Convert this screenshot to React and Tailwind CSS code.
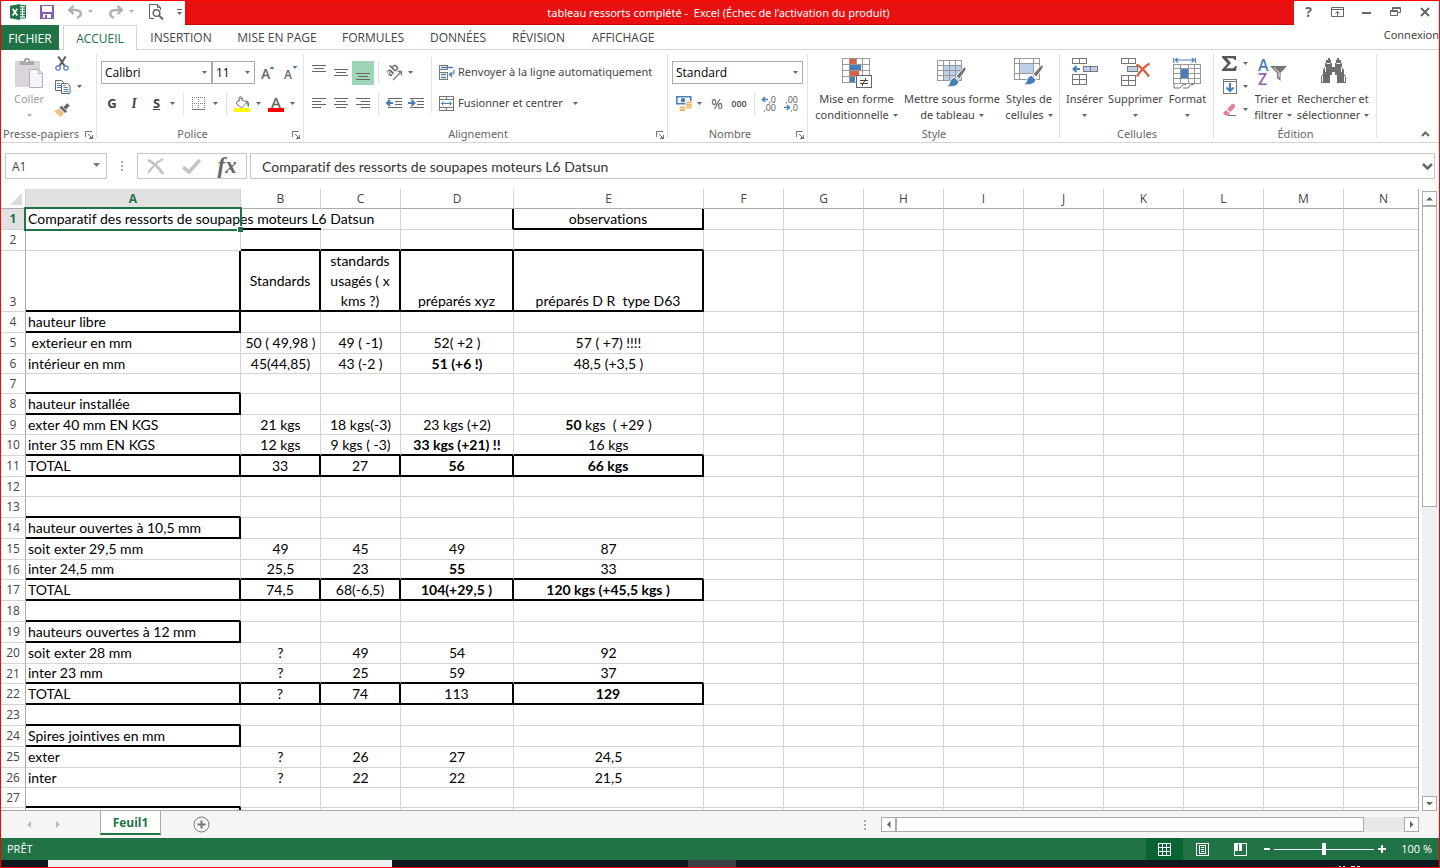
import React from "react";

/* ---------- small shared pieces ---------- */

function Caret({ className = "" }) {
  return (
    <svg width="5" height="3" viewBox="0 0 5 3" className={"shrink-0 " + className} fill="#666" aria-hidden="true">
      <path d="M0 0h5L2.5 3z" />
    </svg>
  );
}

function Tool({ label, w, h = "h-[24px]", children, className = "" }) {
  return (
    <button type="button" aria-label={label} className={"flex shrink-0 items-center justify-center " + h + " " + w + " " + className}>
      {children}
    </button>
  );
}

function Rule() {
  return <span className="h-[22px] w-px shrink-0 bg-[#e1e1e1]" />;
}

function Launcher({ label }) {
  return (
    <button type="button" aria-label={label} className="absolute right-[4px] bottom-[3px]">
      <svg width="8" height="8" viewBox="0 0 8 8" fill="none" stroke="#777" shapeRendering="crispEdges">
        <path d="M.5 6V.5H7M3 3l4 4M7.5 3.5v4h-4" />
        <path d="M5 6h2v2H5z" fill="#777" stroke="none" />
      </svg>
    </button>
  );
}

function Group({ title, w, launcher, children }) {
  return (
    <section aria-label={title} className={"relative flex h-[92px] shrink-0 flex-col " + w}>
      <div className="flex h-[76px] items-start">{children}</div>
      <h2 className={"h-[16px] text-center leading-4 text-[#666] " + (launcher ? "pr-[16px]" : "")}>{title}</h2>
      {launcher && <Launcher label={"Options " + title} />}
      <span className="absolute top-[4px] right-0 h-[84px] w-px bg-[#e1e1e1]" />
    </section>
  );
}

function Big({ icon, lines, w, arrowBelow, muted }) {
  return (
    <button type="button" className={"flex shrink-0 flex-col items-center pt-[8px] leading-4 whitespace-nowrap " + w + (muted ? " text-[#a0a0a0]" : " text-[#444]")}>
      <span className="flex h-[33px] items-start justify-center">{icon}</span>
      <span>{lines[0]}</span>
      {arrowBelow ? (
        <span className="flex h-4 items-center"><Caret className={muted ? "opacity-50" : ""} /></span>
      ) : (
        <span className="flex items-center gap-1">{lines[1]}<Caret /></span>
      )}
    </button>
  );
}

function Combo({ label, value, w }) {
  return (
    <span className={"relative h-[23px] shrink-0 text-xs " + w}>
      <select aria-label={label} defaultValue={value} className="h-full w-full appearance-none border border-[#ababab] bg-white pl-[3px] font-['Open_Sans',sans-serif] text-black outline-none">
        <option>{value}</option>
      </select>
      <Caret className="pointer-events-none absolute top-[10px] right-[5px]" />
    </span>
  );
}

/* ---------- icons ---------- */

const G = "#777";
const B = "#4a7ebb";

function ExcelLogo() {
  return (
    <svg width="16" height="16" viewBox="0 0 16 16" aria-hidden="true">
      <path d="M9 1.500h6.500v12.500H9z" fill="#fff" stroke="#217346" />
      <path d="M10 4h2M13 4h2M10 6.500h2M13 6.500h2M10 9h2M13 9h2M10 11.500h2M13 11.500h2" stroke="#217346" strokeWidth="1.500" />
      <path d="M0 1.800L10 0v16L0 14.200z" fill="#217346" />
      <path d="M2.600 4.800l4.600 6.600M7.200 4.800l-4.600 6.600" stroke="#fff" strokeWidth="1.700" />
    </svg>
  );
}

function Save() {
  return (
    <svg width="14" height="14" viewBox="0 0 14 14" aria-hidden="true" shapeRendering="crispEdges">
      <path d="M0 0h14v14H0z" fill="#8a5bb0" />
      <path d="M2 1h10v6H2zM3 9h8v4H3z" fill="#fff" />
      <path d="M5 10h2v3H5z" fill="#8a5bb0" />
    </svg>
  );
}

function Undo({ flip }) {
  return (
    <svg width="16" height="14" viewBox="0 0 16 14" fill="none" stroke="#b0b0b0" strokeWidth="2.400" className={flip ? "-scale-x-100" : ""} aria-hidden="true">
      <path d="M6.500.8L2.200 5l4.300 4.200M2.500 5H8c7 0 7.500 5.500 2 8" />
    </svg>
  );
}

function Preview() {
  return (
    <svg width="15" height="16" viewBox="0 0 15 16" fill="none" stroke="#666" aria-hidden="true">
      <path d="M5 14.500H.5V.5h8l3 3V6M8.500.5v3h3" />
      <circle cx="7.500" cy="9" r="3.300" fill="#fff" strokeWidth="1.500" />
      <path d="M10 11.500l4 4" strokeWidth="2" />
    </svg>
  );
}

function Paste() {
  return (
    <svg width="30" height="31" viewBox="0 0 30 31" aria-hidden="true">
      <path d="M1 3h25v26H1z" fill="#d9d5da" />
      <path d="M6 3h4V1.500C10 .5 11 0 13 0s3 .5 3 1.500V3h4v4H6z" fill="#a9a9a9" />
      <path d="M12 2h2v2h-2z" fill="#fff" />
      <path d="M15.500 11.500h9l4 4v14h-13z" fill="#f7f3fa" stroke="#b5b0b8" />
      <path d="M24.500 11.500v4h4" fill="none" stroke="#b5b0b8" />
    </svg>
  );
}

function Cut() {
  return (
    <svg width="14" height="15" viewBox="0 0 14 15" fill="none" aria-hidden="true">
      <path d="M3.300.5L9.500 9.800M10.700.5L4.500 9.800" stroke="#5c5c5c" strokeWidth="2" />
      <circle cx="3" cy="12" r="2.200" stroke={B} strokeWidth="1.200" />
      <circle cx="11" cy="12" r="2.200" stroke={B} strokeWidth="1.200" />
    </svg>
  );
}

function Copy() {
  return (
    <svg width="16" height="14" viewBox="0 0 16 14" aria-hidden="true">
      <path d="M.5.5h6l2 2v8h-8z" fill="#fff" stroke="#666" />
      <path d="M2 3.500h3M2 5.500h4M2 7.500h4" stroke={B} />
      <path d="M6.500 3.500h6l2.500 2.500v7.500H6.500z" fill="#fff" stroke="#666" />
      <path d="M8.500 7.500h4M8.500 9.500h5M8.500 11.500h5M8.500 5.500h2" stroke={B} />
    </svg>
  );
}

function Brush() {
  return (
    <svg width="16" height="14" viewBox="0 0 16 14" aria-hidden="true">
      <path d="M5 5.500l5 5-3.500 3.500L0 8z" fill="#ecc27e" />
      <path d="M5.500 4.500l5.500 5.500 2.500-2L8 2.500z" fill="#666" />
      <path d="M10.500 5.500l4-4" stroke="#666" strokeWidth="3.500" />
      <path d="M7.500 2.500l6 6" stroke="#fff" strokeWidth=".6" />
    </svg>
  );
}

function SizeA({ up }) {
  return (
    <svg width="15" height="16" viewBox="0 0 15 16" className="overflow-visible" aria-hidden="true">
      <text x="0" y="14" fontFamily="Open Sans, sans-serif" fontWeight="600" fontSize={up ? 14 : 12} fill="#666">A</text>
      <path d={up ? "M8.500 4l2.500-3 2.500 3z" : "M8.500 1h5L11 4z"} fill={B} />
    </svg>
  );
}

function Borders() {
  return (
    <svg width="13" height="13" viewBox="0 0 13 13" fill="none" stroke="#777" shapeRendering="crispEdges" aria-hidden="true">
      <path strokeDasharray="1 1" d="M0 .5h13M0 6.500h13M.5 0v12M6.500 0v12M12.500 0v12" />
      <path d="M0 12.500h13" />
    </svg>
  );
}

function Fill() {
  return (
    <svg width="16" height="16" viewBox="0 0 16 16" aria-hidden="true">
      <path d="M2 7l5-5 5.500 5-5 5z" fill="#fff" stroke="#777" />
      <path d="M5 6V2c0-2 3-2 3 0v3" fill="none" stroke="#777" />
      <path d="M11 4c4 1 5 4 3.500 7-1 0-1.500-2-1-3z" fill={B} />
      <path d="M0 12h16v4H0z" fill="#ff0" />
    </svg>
  );
}

function FontColor() {
  return (
    <svg width="16" height="16" viewBox="0 0 16 16" className="overflow-visible" aria-hidden="true">
      <text x="8" y="12" textAnchor="middle" fontFamily="Open Sans, sans-serif" fontWeight="600" fontSize="15" fill="#666">A</text>
      <path d="M0 12h16v4H0z" fill="red" />
    </svg>
  );
}

function Lines({ d, w = 14, h = 11 }) {
  return (
    <svg width={w} height={h} viewBox={"0 0 " + w + " " + h} stroke="#666" fill="none" shapeRendering="crispEdges" aria-hidden="true">
      <path d={d} />
    </svg>
  );
}

function Orientation() {
  return (
    <svg width="17" height="16" viewBox="0 0 17 16" className="overflow-visible" aria-hidden="true">
      <text transform="translate(4 12) rotate(-45)" fontFamily="Open Sans, sans-serif" fontWeight="600" fontSize="11" fill="#555">ab</text>
      <path d="M7 15l8-8M11.500 6.500H15.500V10.500" stroke="#777" strokeWidth="1.300" fill="none" />
    </svg>
  );
}

function Indent({ right }) {
  return (
    <svg width="17" height="11" viewBox="0 0 17 11" fill="none" aria-hidden="true">
      <path d="M2 .5h14M9 3.500h7M9 6.500h7M2 9.500h14" stroke="#666" shapeRendering="crispEdges" />
      <path d={right ? "M0 5h6M3.500 2l3 3-3 3" : "M7 5H1M4 2L1 5l3 3"} stroke={B} strokeWidth="2" />
    </svg>
  );
}

function Wrap() {
  return (
    <svg width="16" height="15" viewBox="0 0 16 15" fill="none" aria-hidden="true">
      <path d="M.5 0v15M.5 .5h8M.5 4.500h8v-4M.5 7.500h8v7h-8" stroke="#777" shapeRendering="crispEdges" />
      <path d="M2 2.500h12M2 9.500h5M2 12.500h5M15 5v2c0 2-1 2.500-4.500 2.500M13 7l-2.500 2.500L13 12" stroke={B} strokeWidth="1.300" />
    </svg>
  );
}

function Merge() {
  return (
    <svg width="15" height="15" viewBox="0 0 15 15" fill="none" aria-hidden="true">
      <path d="M.5.5h14v14H.5zM0 3.500h15M0 11.500h15M7.500 0v3M7.500 12v3" stroke="#777" shapeRendering="crispEdges" />
      <path d="M2.500 7.500h10M4.500 5.500l-2 2 2 2M10.500 5.500l2 2-2 2" stroke={B} />
    </svg>
  );
}

function Money() {
  return (
    <svg width="16" height="16" viewBox="0 0 16 16" aria-hidden="true">
      <path d="M.8.800h14v7H.800z" fill="#fff" stroke={B} strokeWidth="1.600" />
      <circle cx="7" cy="4.300" r="2.200" fill={B} />
      <path d="M9.500 5h7v10h-7zM3 9h6.500v7H3z" fill="#fff" />
      <path d="M11 6.500h4M11 9h4M11 11.500h4M4.500 11.500h4M4.500 14h4" stroke="#ecb765" strokeWidth="1.800" strokeLinecap="round" />
    </svg>
  );
}

function Decimals({ more }) {
  return (
    <svg width="16" height="16" viewBox="0 0 16 16" className="overflow-visible" fontFamily="Open Sans, sans-serif" fontSize="9" fill="#555" aria-hidden="true">
      <text x="15" y="7" textAnchor="end">{more ? ",0" : ",00"}</text>
      <text x="15" y="15" textAnchor="end">{more ? ",00" : ",0"}</text>
      <path d={more ? "M7 3.500H1.500M4 1L1.500 3.500 4 6" : "M1 11.500h5.500M4 9l2.500 2.500L4 14"} stroke={B} strokeWidth="1.500" fill="none" />
    </svg>
  );
}

function CondFormat() {
  return (
    <svg width="30" height="31" viewBox="0 0 30 31" shapeRendering="crispEdges" aria-hidden="true">
      <path d="M.5.5h27v24H.5z" fill="#fff" />
      <path d="M8 1h6v5H8zM8 13h9v5H8z" fill="#d9613f" />
      <path d="M8 7h11v5H8zM8 19h5v5H8z" fill={B} />
      <path d="M.5.5h27v24H.5zM0 6.500h28M0 12.500h28M0 18.500h28M7.500 0v25M14.500 0v7M20.500 0v25" fill="none" stroke="#999" />
      <path d="M14.500 17.500h15v12h-15z" fill="#fff" stroke="#666" />
      <path d="M18 22.500h8M18 25.500h8M24 20l-4 8" stroke="#444" />
    </svg>
  );
}

function BrushOver() {
  return (
    <>
      <path d="M28.500 7c1.500 1 .5 3-1 5l-5 7-3.500-3 6-6.500c1.500-1.500 2.500-3 3.500-2.500z" fill="#777" stroke="#fff" />
      <path d="M17.500 17.500l4.500 4c-1 5-7 6-13 5 3-1 3-2 4-5 .8-2 2.500-4 4.500-4z" fill={B} stroke="#fff" />
    </>
  );
}

function TableFormat() {
  return (
    <svg width="30" height="31" viewBox="0 -2 30 31" aria-hidden="true">
      <g shapeRendering="crispEdges">
        <path d="M.5.5h24v20H.5z" fill="#fff" />
        <path d="M7 6h18v15H7z" fill="#bdd0e9" />
        <path d="M.5.5h24v20H.5zM0 5.500h25M0 10.500h25M0 15.500h25M6.500 0v21M12.500 0v21M18.500 0v21" fill="none" stroke="#999" />
      </g>
      <BrushOver />
    </svg>
  );
}

function CellStyles() {
  return (
    <svg width="30" height="30" viewBox="0 0 30 30" aria-hidden="true">
      <g shapeRendering="crispEdges">
        <path d="M.5.5h25v21H.5z" fill="#fff" />
        <path d="M6 6h14v10H6z" fill="#bdd0e9" />
        <path d="M.5.5h25v21H.5zM0 5.500h26M0 15.500h26M5.500 0v22M19.500 0v22" fill="none" stroke="#999" />
      </g>
      <BrushOver />
    </svg>
  );
}

function InsertCells() {
  return (
    <svg width="26" height="28" viewBox="0 0 26 28" fill="none" aria-hidden="true">
      <g shapeRendering="crispEdges" stroke={G}>
        <path d="M.5.5h14v5H.5zM7.500 0v6M.5 16.500h14v10H.5zM0 21.500h15M7.500 16v11" />
        <path d="M11.500 8.500h14v5h-14zM18.500 8v6" fill="#bdd0e9" />
      </g>
      <path d="M8 11H2M4.500 8L1.500 11l3 3" stroke={B} strokeWidth="2" />
    </svg>
  );
}

function DeleteCells() {
  return (
    <svg width="30" height="28" viewBox="0 0 30 28" fill="none" aria-hidden="true">
      <g shapeRendering="crispEdges" stroke={G}>
        <path d="M.5.5h14v5H.5zM7.500 0v6M.5 17.500h14v10H.5zM0 22.500h15M7.500 17v11" />
        <path d="M6.500 8.500h10v5h-10z" fill="#bdd0e9" />
      </g>
      <path d="M15.500 6.500c5 3 9 7 12.500 12M28.500 5.500c-5 3-9 7-12.500 13" stroke="#d9613f" strokeWidth="2.400" />
    </svg>
  );
}

function FormatCells() {
  return (
    <svg width="29" height="32" viewBox="0 1 29 32" fill="none" aria-hidden="true">
      <path d="M.8 0v6M22.500 0v6M2 3h20M5 .5L2.500 3 5 5.500M18.500.5L21 3l-2.500 2.500" stroke={B} strokeWidth="1.200" />
      <path d="M.5 7.500h27v19H.5z" fill="#fff" />
      <path d="M8 12h7v9H8z" fill={B} />
      <path d="M.5 7.500h27v19H.5zM0 11.500h28M0 16.500h8M15 16.500h13M0 21.500h28M7.500 7v20M15.500 7v20M21.500 7v20" stroke="#999" shapeRendering="crispEdges" />
      <path d="M1 27v4h6l3-3.500h3M10 31h5l3-3.500h3" stroke={G} />
    </svg>
  );
}

function Sigma() {
  return (
    <svg width="15" height="15" viewBox="0 0 15 15" aria-hidden="true">
      <path d="M0 0h14v4h-1.500c-.3-1.200-1-1.800-2.500-1.800H4.800L9 7l-4.800 5.200H10.500c1.500 0 2.200-.8 2.800-2.200h1.500L14 15H0v-1.500L5.500 7.500 0 1.500z" fill="#555" />
    </svg>
  );
}

function FillDown() {
  return (
    <svg width="14" height="15" viewBox="0 0 14 15" fill="none" aria-hidden="true">
      <path d="M.5.5h13v14H.5zM0 2.500h14" stroke={G} shapeRendering="crispEdges" />
      <path d="M7 4v8M3.500 8.500L7 12l3.500-3.500" stroke={B} strokeWidth="2" />
    </svg>
  );
}

function Eraser() {
  return (
    <svg width="14" height="14" viewBox="0 0 14 14" aria-hidden="true">
      <path d="M4 6l5-5c1-1 4 1 3 3L7.500 9z" fill="#e58094" />
      <path d="M0 10l3-3 4 3.500L5 12.500H2z" fill="#e58094" />
      <path d="M5 12.500h8" stroke={G} />
    </svg>
  );
}

function SortFilter() {
  return (
    <svg width="30" height="30" viewBox="0 0 30 30" className="overflow-visible" fontFamily="Open Sans, sans-serif" fontWeight="600" aria-hidden="true">
      <text x="0" y="13" fontSize="16" fill={B}>A</text>
      <text x="0" y="27" fontSize="16" fill="#9a5fb5">Z</text>
      <path d="M12 8h17l-6.500 7v8L19 20v-5z" fill="#777" />
      <path d="M16 9.500l5 5v5" stroke="#fff" fill="none" />
    </svg>
  );
}

function Binoculars() {
  return (
    <svg width="27" height="26" viewBox="0 0 27 26" fill="#6e6e6e" aria-hidden="true">
      <path d="M6 2h2V0h2v2h1v3h1v4h3V5h1V2h1V0h2v2h2v3h1v4l2 3v4l2 3v6H17v-8h-2v-3h-3v3h-2v8H1v-6l2-3v-4l2-3V5h1z" />
      <path d="M6.500 5.500h4M16.500 5.500h4M5.500 9v5M21.500 9v5M2.500 18v6M24.500 18v6" stroke="#fff" />
    </svg>
  );
}

/* ---------- title bar and tabs ---------- */

function TitleBar() {
  return (
    <header className="flex h-[24px] shrink-0 bg-white">
      <div className="flex w-[184px] shrink-0 items-center pb-[3px] pl-[9px]">
        <span className="w-[28px]"><ExcelLogo /></span>
        <button type="button" aria-label="Enregistrer" className="w-[29px] pl-[2px]"><Save /></button>
        <button type="button" aria-label="Annuler" className="flex w-[41px] items-center gap-[5px]"><Undo /><Caret className="opacity-50" /></button>
        <button type="button" aria-label="Rétablir" className="flex w-[41px] items-center gap-[5px]"><Undo flip /><Caret className="opacity-50" /></button>
        <button type="button" aria-label="Aperçu avant impression" className="w-[28px]"><Preview /></button>
        <button type="button" aria-label="Personnaliser la barre d'outils" className="pt-[2px]">
          <svg width="5" height="7" viewBox="0 0 5 7" fill="#666"><path d="M0 0h5v1H0zM0 3h5L2.500 6z" /></svg>
        </button>
      </div>
      <h1 className="flex-1 truncate border-b border-[#c00] bg-[#e81010] pr-[42px] text-center leading-6 whitespace-pre text-white">{"tableau ressorts complété -  Excel (Échec de l’activation du produit)"}</h1>
      <div className="flex w-[145px] shrink-0 items-center pb-[3px] text-[#666]">
        <button type="button" aria-label="Aide" className="w-[29px] text-center text-sm leading-5 font-bold">?</button>
        <button type="button" aria-label="Options d'affichage du ruban" className="flex w-[29px] justify-center">
          <svg width="13" height="10" viewBox="0 0 13 10" fill="none" stroke="#666"><path d="M.5.5h12v9H.5zM0 2.500h13M6.500 9V4.500M4.500 6.500l2-2 2 2" /></svg>
        </button>
        <button type="button" aria-label="Réduire" className="flex w-[29px] justify-center pt-[3px]">
          <svg width="9" height="2"><path d="M0 0h9v2H0z" fill="#666" /></svg>
        </button>
        <button type="button" aria-label="Niveau inférieur" className="flex w-[29px] justify-center">
          <svg width="11" height="9" viewBox="0 0 11 9" fill="none" stroke="#666"><path d="M2.500 3V.5h8v5H8M3 1.500h7M.5 3.500h7v5h-7zM1 4.500h6" /></svg>
        </button>
        <button type="button" aria-label="Fermer" className="flex w-[29px] justify-center">
          <svg width="10" height="10" viewBox="0 0 10 10" stroke="#666" strokeWidth="2"><path d="M1 1l8 8M9 1L1 9" /></svg>
        </button>
      </div>
    </header>
  );
}

const tabs = [
  ["INSERTION", "w-[88px]"],
  ["MISE EN PAGE", "w-[104px]"],
  ["FORMULES", "w-[88px]"],
  ["DONNÉES", "w-[82px]"],
  ["RÉVISION", "w-[79px]"],
  ["AFFICHAGE", "w-[90px]"],
];

function Tabs() {
  return (
    <nav className="flex h-[25px] shrink-0 overflow-hidden font-['Open_Sans',sans-serif] text-xs leading-5 text-[#444]">
      <button type="button" className="w-[58px] shrink-0 bg-[#217346] pt-[2px] text-white">FICHIER</button>
      <span className="w-[4px] shrink-0 border-b border-[#d4d4d4]" />
      <button type="button" className="w-[74px] shrink-0 border border-b-0 border-[#d4d4d4] pt-[1px] text-[#217346]">ACCUEIL</button>
      <div className="flex min-w-0 flex-1 border-b border-[#d4d4d4]">
        {tabs.map(([name, w]) => (
          <button key={name} type="button" className={"shrink-0 pt-[2px] whitespace-nowrap " + w}>{name}</button>
        ))}
        <a href="#connexion" className="ml-auto shrink-0 font-['Noto_Sans',sans-serif] text-[11px] leading-5 whitespace-nowrap">Connexion</a>
      </div>
    </nav>
  );
}

/* ---------- ribbon ---------- */

function Ribbon() {
  return (
    <div className="flex h-[93px] shrink-0 border-b border-[#d4d4d4]">
      <Group title="Presse-papiers" w="w-[96px]" launcher>
        <span className="w-[3px]" />
        <Big icon={<Paste />} lines={["Coller"]} w="w-[50px]" arrowBelow muted />
        <div className="flex flex-col pt-[2px]">
          <Tool label="Couper" w="w-[16px]" h="h-[23px]"><Cut /></Tool>
          <Tool label="Copier" w="w-[28px]" h="h-[23px]" className="gap-[6px]"><Copy /><Caret /></Tool>
          <Tool label="Reproduire la mise en forme" w="w-[16px]" h="h-[23px]"><Brush /></Tool>
        </div>
      </Group>

      <Group title="Police" w="w-[207px]" launcher>
        <div className="flex flex-col pt-[7px] pl-[4px]">
          <div className="flex h-[31px] items-center">
            <Combo label="Police" value="Calibri" w="w-[111px]" />
            <Combo label="Taille de police" value="11" w="w-[43px]" />
            <Tool label="Augmenter la taille" w="w-[27px]"><SizeA up /></Tool>
            <Tool label="Réduire la taille" w="w-[19px]"><SizeA /></Tool>
          </div>
          <div className="flex h-[31px] items-center text-[13px] text-[#444]">
            <Tool label="Gras" w="w-[22px]"><b>G</b></Tool>
            <Tool label="Italique" w="w-[22px]"><i className="font-serif font-bold">I</i></Tool>
            <Tool label="Souligné" w="w-[38px]" className="gap-[10px]"><b className="underline">S</b><Caret /></Tool>
            <Rule />
            <Tool label="Bordures" w="w-[42px]" className="gap-[8px]"><Borders /><Caret /></Tool>
            <Rule />
            <Tool label="Couleur de remplissage" w="w-[40px]" className="gap-[6px]"><Fill /><Caret /></Tool>
            <Tool label="Couleur de police" w="w-[28px]" className="gap-[6px]"><FontColor /><Caret /></Tool>
          </div>
        </div>
      </Group>

      <Group title="Alignement" w="w-[364px]" launcher>
        <div className="flex pt-[7px] pl-[4px]">
          <div className="flex flex-col">
            <div className="flex h-[31px] items-center">
              <Tool label="Aligner en haut" w="w-[22px]" className="pb-[8px]"><Lines h={7} d="M0 .5h14M2 3.500h10M0 6.500h14" /></Tool>
              <Tool label="Aligner au centre" w="w-[22px]"><Lines h={7} d="M0 .5h14M2 3.500h10M0 6.500h14" /></Tool>
              <Tool label="Aligner en bas" w="w-[22px]" className="bg-[#9fd5b7] pt-[8px]"><Lines h={7} d="M0 .5h14M2 3.500h10M0 6.500h14" /></Tool>
              <span className="w-[4px]" /><Rule />
              <Tool label="Orientation" w="w-[40px]" className="gap-[5px]"><Orientation /><Caret /></Tool>
            </div>
            <div className="flex h-[31px] items-center">
              <Tool label="Aligner à gauche" w="w-[22px]"><Lines d="M0 .5h14M0 3.500h9M0 6.500h14M0 9.500h9" /></Tool>
              <Tool label="Centrer" w="w-[22px]"><Lines d="M0 .5h14M2 3.500h10M0 6.500h14M2 9.500h10" /></Tool>
              <Tool label="Aligner à droite" w="w-[22px]"><Lines d="M0 .5h14M5 3.500h9M0 6.500h14M5 9.500h9" /></Tool>
              <span className="w-[4px]" /><Rule />
              <span className="w-[4px]" />
              <Tool label="Diminuer le retrait" w="w-[22px]"><Indent /></Tool>
              <Tool label="Augmenter le retrait" w="w-[22px]"><Indent right /></Tool>
            </div>
          </div>
          <span className="ml-[4px] h-[56px] w-px bg-[#e1e1e1]" />
          <div className="flex flex-col pl-[7px] whitespace-nowrap text-[#444]">
            <button type="button" className="flex h-[31px] items-center gap-[3px]"><Wrap />Renvoyer à la ligne automatiquement</button>
            <button type="button" className="flex h-[31px] items-center gap-[4px]"><Merge />Fusionner et centrer<Caret className="ml-[6px]" /></button>
          </div>
        </div>
      </Group>

      <Group title="Nombre" w="w-[140px]" launcher>
        <div className="flex flex-col pt-[7px] pl-[4px]">
          <div className="flex h-[31px] items-center">
            <Combo label="Format de nombre" value="Standard" w="w-[131px]" />
          </div>
          <div className="flex h-[31px] items-center text-[#555]">
            <Tool label="Format comptable" w="w-[34px]" className="gap-[5px]"><Money /><Caret /></Tool>
            <Tool label="Pourcentage" w="w-[22px]" className="text-sm">%</Tool>
            <Tool label="Milliers" w="w-[22px]" className="text-[9px] font-semibold">000</Tool>
            <span className="w-[4px]" /><Rule />
            <span className="w-[3px]" />
            <Tool label="Ajouter une décimale" w="w-[22px]"><Decimals more /></Tool>
            <Tool label="Réduire les décimales" w="w-[22px]"><Decimals /></Tool>
          </div>
        </div>
      </Group>

      <Group title="Style" w="w-[252px]">
        <Big icon={<CondFormat />} lines={["Mise en forme", "conditionnelle"]} w="w-[97px]" />
        <Big icon={<TableFormat />} lines={["Mettre sous forme", "de tableau"]} w="w-[94px]" />
        <Big icon={<CellStyles />} lines={["Styles de", "cellules"]} w="w-[60px]" />
      </Group>

      <Group title="Cellules" w="w-[154px]">
        <Big icon={<InsertCells />} lines={["Insérer"]} w="w-[49px]" arrowBelow />
        <Big icon={<DeleteCells />} lines={["Supprimer"]} w="w-[53px]" arrowBelow />
        <Big icon={<FormatCells />} lines={["Format"]} w="w-[51px]" arrowBelow />
      </Group>

      <Group title="Édition" w="w-[163px]">
        <div className="flex flex-col pt-[2px] pl-[6px]">
          <Tool label="Somme automatique" w="w-[30px]" h="h-[23px]" className="gap-[6px]"><Sigma /><Caret /></Tool>
          <Tool label="Remplissage" w="w-[30px]" h="h-[23px]" className="gap-[6px]"><FillDown /><Caret /></Tool>
          <Tool label="Effacer" w="w-[30px]" h="h-[23px]" className="gap-[6px]"><Eraser /><Caret /></Tool>
        </div>
        <Big icon={<SortFilter />} lines={["Trier et", "filtrer"]} w="w-[46px]" />
        <Big icon={<Binoculars />} lines={["Rechercher et", "sélectionner"]} w="w-[74px]" />
      </Group>

      <button type="button" aria-label="Réduire le ruban" className="mt-auto mr-[9px] mb-[5px] ml-auto">
        <svg width="9" height="6" viewBox="0 0 9 6" fill="none" stroke="#666" strokeWidth="2"><path d="M1 5l3.500-3.500L8 5" /></svg>
      </button>
    </div>
  );
}

/* ---------- formula bar ---------- */

function FormulaBar() {
  return (
    <div className="flex h-[46px] shrink-0 items-start pt-[10px] pr-[4px] pl-[4px] text-[13px] text-[#444]">
      <div className="relative h-[26px] w-[102px] shrink-0">
        <input aria-label="Zone Nom" defaultValue="A1" className="h-full w-full border border-[#c6c6c6] pl-[6px] font-['Open_Sans',sans-serif] text-xs outline-none" />
        <svg width="7" height="4" className="absolute top-[10px] right-[7px]" fill="#777"><path d="M0 0h7L3.500 4z" /></svg>
      </div>
      <svg width="30" height="26" fill="#aaa" shapeRendering="crispEdges" aria-hidden="true"><path d="M14 8h2v2h-2zM14 12h2v2h-2zM14 16h2v2h-2z" /></svg>
      <div className="flex h-[26px] w-[110px] shrink-0 items-center justify-around border border-[#c6c6c6] px-[1px]">
        <button type="button" aria-label="Annuler la saisie">
          <svg width="18" height="17" viewBox="0 0 18 17" stroke="#c4c4c4" fill="none"><path d="M1 2c6 3 11 8 15 14" strokeWidth="3" /><path d="M16 1C10 4 5 9 1 15" strokeWidth="2" /></svg>
        </button>
        <button type="button" aria-label="Entrer">
          <svg width="19" height="16" viewBox="0 0 19 16" stroke="#c4c4c4" fill="none"><path d="M1 9l6 5L18 2" strokeWidth="3.500" /></svg>
        </button>
        <button type="button" aria-label="Insérer une fonction" className="font-['Liberation_Serif',serif] text-[23px] leading-5 font-bold text-[#666] italic">fx</button>
      </div>
      <div className="relative ml-[3px] h-[26px] min-w-0 flex-1">
        <input aria-label="Barre de formule" defaultValue="Comparatif des ressorts de soupapes moteurs L6 Datsun" className="h-full w-full border border-[#c6c6c6] pl-[11px] font-[Lato,sans-serif] text-sm text-[#333] outline-none [font-variant-ligatures:none]" />
        <svg width="11" height="8" viewBox="0 0 11 8" className="absolute top-[10px] right-[2px]" fill="none" stroke="#666" strokeWidth="2.500"><path d="M1 1l4.500 4.500L10 1" /></svg>
      </div>
    </div>
  );
}

/* ---------- worksheet ---------- */

const letters = ["A", "B", "C", "D", "E", "F", "G", "H", "I", "J", "K", "L", "M", "N"];
const colWidths = ["w-[215px]", "w-[80px]", "w-[80px]", "w-[113px]", "w-[190px]"];
const T = "h-[20px]";
const M = "h-[21px]";

/* h: height, v: values A–E, r / b: columns with a thick right / bottom edge, bold: bold columns */
const rows = [
  { h: M, v: ["", "", "", "", "observations"], r: "DE", b: "BE" },
  { h: M, v: [], b: "BCDE" },
  { h: "h-[61px]", v: ["", "Standards", "standards usagés ( x kms ?)", "préparés xyz", "préparés D R  type D63"], r: "ABCDE", b: "ABCDE" },
  { h: M, v: ["hauteur libre"], r: "A", b: "A" },
  { h: M, v: [" exterieur en mm", "50 ( 49,98 )", "49 ( -1)", "52( +2 )", "57 ( +7) !!!!"] },
  { h: T, v: ["intérieur en mm", "45(44,85)", "43 (-2 )", "51 (+6 !)", "48,5 (+3,5 )"], bold: "D" },
  { h: T, v: [], b: "A" },
  { h: M, v: ["hauteur installée"], r: "A", b: "A" },
  { h: T, v: ["exter 40 mm EN KGS", "21 kgs", "18 kgs(-3)", "23 kgs (+2)", <><b key="n">50</b>{" kgs  ( +29 )"}</>] },
  { h: M, v: ["inter 35 mm EN KGS", "12 kgs", "9 kgs ( -3)", "33 kgs (+21) !!", "16 kgs"], b: "ABCDE", bold: "D" },
  { h: M, v: ["TOTAL", "33", "27", "56", "66 kgs"], r: "ABCDE", b: "ABCDE", bold: "DE" },
  { h: T, v: [] },
  { h: M, v: [], b: "A" },
  { h: M, v: ["hauteur ouvertes à 10,5 mm"], r: "A", b: "A" },
  { h: M, v: ["soit exter 29,5 mm", "49", "45", "49", "87"] },
  { h: T, v: ["inter 24,5 mm", "25,5", "23", "55", "33"], b: "ABCDE", bold: "D" },
  { h: M, v: ["TOTAL", "74,5", "68(-6,5)", "104(+29,5 )", "120 kgs (+45,5 kgs )"], r: "ABCDE", b: "ABCDE", bold: "DE" },
  { h: M, v: [], b: "A" },
  { h: M, v: ["hauteurs ouvertes à 12 mm"], r: "A", b: "A" },
  { h: M, v: ["soit exter 28 mm", "?", "49", "54", "92"] },
  { h: T, v: ["inter 23 mm", "?", "25", "59", "37"], b: "ABCDE" },
  { h: M, v: ["TOTAL", "?", "74", "113", "129"], r: "ABCDE", b: "ABCDE", bold: "E" },
  { h: M, v: [], b: "A" },
  { h: M, v: ["Spires jointives en mm"], r: "A", b: "A" },
  { h: M, v: ["exter", "?", "26", "27", "24,5"] },
  { h: T, v: ["inter", "?", "22", "22", "21,5"] },
  { h: T, v: [], b: "A" },
];

function edges(row, col) {
  const right = (row.r || "").includes(col) ? "border-r-2 border-r-black" : "border-r border-r-[#d4d4d4]";
  const bottom = (row.b || "").includes(col) ? "border-b-2 border-b-black" : "border-b border-b-[#d4d4d4]";
  return right + " " + bottom;
}

function Cell({ row, index, col, i }) {
  if (index === 0 && i === 0) {
    return (
      <td className="relative border-r border-b border-[#d4d4d4] p-0 pl-[2px] whitespace-nowrap">
        <span>Comparatif des ressorts de soupapes moteurs L6 Datsun</span>
        <span className="absolute -top-[2px] -right-[2px] -bottom-[2px] -left-[2px] border-2 border-[#217346]">
          <span className="absolute -right-[3px] -bottom-[3px] h-[6px] w-[6px] border-t border-l border-white bg-[#217346]" />
        </span>
      </td>
    );
  }
  if (index === 0 && i === 1) {
    return <td className="border-b-2 border-b-black p-0" />;
  }
  const wrap = index === 2 && i === 2;
  const align = i === 0 ? "pl-[2px] text-left whitespace-pre" : wrap ? "text-center" : "text-center whitespace-pre";
  const valign = index === 2 && i !== 1 && !wrap ? "align-bottom" : "align-middle";
  const bold = (row.bold || "").includes(col) ? "font-bold" : "";
  return (
    <td className={"p-0 " + edges(row, col) + " " + align + " " + valign + " " + bold}>
      {wrap ? <div className="flex h-[58px] items-center justify-center px-[8px] leading-5">{row.v[i]}</div> : row.v[i]}
    </td>
  );
}

function Sheet() {
  return (
    <div className="min-w-0 flex-1 overflow-hidden border-r border-b border-[#ababab]">
      <table className="w-[1423px] table-fixed border-separate border-spacing-0 font-[Lato,sans-serif] text-sm leading-[18px] text-black [font-variant-ligatures:none]">
        <colgroup>
          <col className="w-[25px]" />
          {letters.map((l, i) => <col key={l} className={colWidths[i] || "w-[80px]"} />)}
        </colgroup>
        <thead>
          <tr className="h-[20px] font-['Open_Sans',sans-serif] text-xs text-[#444]">
            <th aria-label="Tout sélectionner" className="border-r border-b border-r-[#d4d4d4] border-b-[#ababab] p-0">
              <svg width="12" height="12" className="ml-auto mr-[3px]" fill="#dcdcdc"><path d="M12 0v12H0z" /></svg>
            </th>
            {letters.map((l, i) => (
              <th key={l} scope="col" className={"border-r border-b border-r-[#d4d4d4] border-b-[#ababab] p-0 " + (i === 0 ? "bg-[#e1e1e1] font-bold text-[#217346]" : "font-normal")}>{l}</th>
            ))}
          </tr>
        </thead>
        <tbody>
          {rows.map((row, n) => (
            <tr key={n} className={row.h}>
              <th scope="row" className={"border-r border-b border-r-[#ababab] border-b-[#d4d4d4] p-0 font-['Open_Sans',sans-serif] text-xs leading-[18px] " + (n === 2 ? "align-bottom " : "align-middle ") + (n === 0 ? "bg-[#e1e1e1] font-bold text-[#217346]" : "font-normal text-[#444]")}>{n + 1}</th>
              {letters.map((col, i) => <Cell key={col} row={row} index={n} col={col} i={i} />)}
            </tr>
          ))}
          <tr className="h-[20px]">
            <th className="border-r border-r-[#ababab] p-0" />
            {letters.map((col, i) => <td key={col} className={i === 0 ? "border-r-2 border-black p-0" : "border-r border-[#d4d4d4] p-0"} />)}
          </tr>
        </tbody>
      </table>
    </div>
  );
}

function Arrow({ d }) {
  return <svg width="9" height="9" viewBox="0 0 9 9" fill="#666" aria-hidden="true"><path d={d} /></svg>;
}

function VerticalScroll() {
  return (
    <div className="flex w-[20px] shrink-0 flex-col pt-[2px] pr-[2px] pl-[3px]">
      <button type="button" aria-label="Défiler vers le haut" className="flex h-[15px] items-center justify-center border border-[#ababab]"><Arrow d="M1 6.500h7L4.500 3z" /></button>
      <div className="flex-1 bg-[#f0f0f0]"><div className="h-[51%] border border-[#ababab] bg-white" /></div>
      <button type="button" aria-label="Défiler vers le bas" className="flex h-[15px] items-center justify-center border border-[#ababab]"><Arrow d="M1 3h7L4.500 6.500z" /></button>
    </div>
  );
}

function SheetTabs() {
  return (
    <div className="flex h-[27px] shrink-0 bg-[#f5f5f5]">
      <div className="flex w-[99px] shrink-0 items-center gap-[20px] pl-[23px] opacity-40">
        <Arrow d="M7 1v7L3 4.500z" />
        <Arrow d="M3 1v7l4-3.500z" />
      </div>
      <button type="button" className="h-[24px] w-[61px] shrink-0 border-x border-b-2 border-x-[#ababab] border-b-[#217346] bg-white pt-[2px] font-['Open_Sans',sans-serif] text-xs leading-5 font-bold text-[#217346]">Feuil1</button>
      <button type="button" aria-label="Nouvelle feuille" className="ml-[32px]">
        <svg width="17" height="17" viewBox="0 0 17 17" fill="none" stroke="#777"><circle cx="8.500" cy="8.500" r="7.500" /><path d="M4.500 8.500h8M8.500 4.500v8" strokeWidth="2" /></svg>
      </button>
      <div className="ml-auto flex items-center pr-[20px]">
        <svg width="2" height="10" fill="#aaa" className="mr-[15px]"><path d="M0 0h2v2H0zM0 4h2v2H0zM0 8h2v2H0z" /></svg>
        <div className="flex h-[15px] w-[538px] bg-[#e8e8e8]">
          <button type="button" aria-label="Défiler à gauche" className="flex w-[15px] shrink-0 items-center justify-center border border-[#ababab] bg-white"><Arrow d="M6.500 1v7L3 4.500z" /></button>
          <div className="w-[468px] border border-[#ababab] bg-white" />
          <button type="button" aria-label="Défiler à droite" className="ml-auto flex w-[15px] shrink-0 items-center justify-center border border-[#ababab] bg-white"><Arrow d="M3 1v7l3.500-3.500z" /></button>
        </div>
      </div>
    </div>
  );
}

/* ---------- status bar ---------- */

function StatusBar() {
  return (
    <footer className="flex h-[22px] shrink-0 items-center bg-[#217346] pl-[6px] font-['Open_Sans',sans-serif] text-white">
      <span>PRÊT</span>
      <div className="ml-auto flex h-full items-center">
        <button type="button" aria-label="Normal" className="flex h-full w-[37px] items-center justify-center bg-[#0a6332]">
          <svg width="13" height="13" viewBox="0 0 13 13" fill="none" stroke="#fff" shapeRendering="crispEdges"><path d="M.5.5h12v12H.5zM4.500 0v13M8.500 0v13M0 4.500h13M0 8.500h13" /></svg>
        </button>
        <button type="button" aria-label="Mise en page" className="flex h-full w-[38px] items-center justify-center">
          <svg width="13" height="13" viewBox="0 0 13 13" fill="none" stroke="#fff" shapeRendering="crispEdges"><path d="M.5.5h12v12H.5zM3.500 2.500h6v8h-6zM5 4.500h3M5 6.500h3M5 8.500h3" /></svg>
        </button>
        <button type="button" aria-label="Aperçu des sauts de page" className="flex h-full w-[38px] items-center justify-center">
          <svg width="13" height="13" viewBox="0 0 13 13" shapeRendering="crispEdges"><path d="M.5.5h12v12H.5z" fill="none" stroke="#fff" /><path d="M1 1h3v7H1zM5 1h3v7H5z" fill="#fff" /></svg>
        </button>
        <button type="button" aria-label="Zoom arrière" className="ml-[5px] flex w-[10px]"><svg width="6" height="2"><path d="M0 0h6v2H0z" fill="#fff" /></svg></button>
        <input
          type="range"
          aria-label="Zoom"
          min="10"
          max="190"
          defaultValue="100"
          className="h-[12px] w-[100px] appearance-none bg-transparent bg-[linear-gradient(white,white)] bg-[length:100%_1px] bg-center bg-no-repeat [&::-webkit-slider-thumb]:h-[12px] [&::-webkit-slider-thumb]:w-[4px] [&::-webkit-slider-thumb]:appearance-none [&::-webkit-slider-thumb]:bg-white"
        />
        <button type="button" aria-label="Zoom avant" className="ml-[4px]"><svg width="8" height="8"><path d="M0 3h8v2H0zM3 0h2v8H3z" fill="#fff" /></svg></button>
        <span className="w-[53px] pr-[7px] text-right">100 %</span>
      </div>
    </footer>
  );
}

function Taskbar() {
  return (
    <div className="flex h-[7px] shrink-0 bg-[#101820]">
      <span className="ml-[47px] w-[344px] bg-[#f0f0f0]" />
      <span className="ml-[296px] w-[48px] bg-[#3b3f44]" />
      <svg width="24" height="7" className="mr-[76px] ml-auto" fill="#ddd" aria-hidden="true"><path d="M0 6h2v1H0zM4 6h2v1H4zM12 6h4v1h-4zM18 6h3v1h-3z" /></svg>
    </div>
  );
}

export default function App() {
  return (
    <div className="flex h-screen flex-col overflow-hidden border border-[#f00] bg-white font-['Noto_Sans',sans-serif] text-[11px]">
      <TitleBar />
      <Tabs />
      <Ribbon />
      <FormulaBar />
      <main className="flex min-h-0 flex-1">
        <Sheet />
        <VerticalScroll />
      </main>
      <SheetTabs />
      <StatusBar />
      <Taskbar />
    </div>
  );
}
